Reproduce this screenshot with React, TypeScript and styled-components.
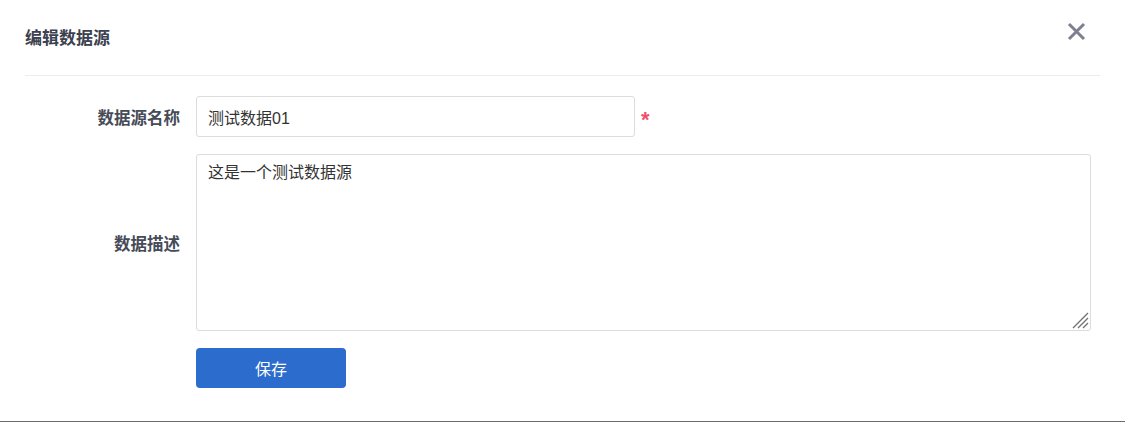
import React from "react";
import styled, { createGlobalStyle } from "styled-components";

const GlobalStyle = createGlobalStyle`
  html, body { margin: 0; padding: 0; background: #fff; }
  body { font-family: "Liberation Sans", "Noto Sans CJK SC", sans-serif; }
  * { box-sizing: border-box; }
`;

const Dialog = styled.div`
  position: relative;
  width: 1125px;
  height: 422px;
  background: #fff;
  border-bottom: 1px solid #6b6b6b;
`;

const Header = styled.div`
  margin: 0 25px;
  height: 76px;
  display: flex;
  align-items: center;
  justify-content: space-between;
  border-bottom: 1px solid #ececec;
`;

const Title = styled.h2`
  margin: 0;
  font-size: 17px;
  font-weight: 700;
  color: #3c4150;
  padding-bottom: 2px;
`;

const CloseButton = styled.button`
  position: absolute;
  top: 21px;
  right: 38px;
  width: 21px;
  height: 21px;
  padding: 0;
  border: 0;
  background: transparent;
  cursor: pointer;
  display: flex;
  align-items: center;
  justify-content: center;
`;

const Form = styled.div`
  display: grid;
  grid-template-columns: 180px 1fr;
  column-gap: 16px;
  row-gap: 17px;
  padding: 20px 34px 0 0;
  align-items: center;
`;

const Label = styled.label`
  text-align: right;
  font-size: 16.5px;
  font-weight: 700;
  color: #464b57;
`;

const FieldRow = styled.div`
  display: flex;
  align-items: center;
  gap: 6px;
`;

const TextInput = styled.input`
  width: 439px;
  height: 41px;
  border: 1px solid #dcdcdc;
  border-radius: 3px;
  padding: 0 11px;
  font-family: "Liberation Sans", "Noto Sans CJK SC", sans-serif;
  font-size: 16px;
  color: #333;
  outline: none;
`;

const Required = styled.span`
  color: #f0506e;
  font-size: 22px;
  font-weight: 700;
  line-height: 1;
  padding-top: 7px;
`;

const AreaWrap = styled.div`
  position: relative;
`;

const TextArea = styled.textarea`
  width: 100%;
  height: 177px;
  display: block;
  border: 1px solid #dcdcdc;
  border-radius: 3px;
  padding: 7px 11px;
  font-family: "Liberation Sans", "Noto Sans CJK SC", sans-serif;
  font-size: 16px;
  line-height: 22px;
  color: #333;
  outline: none;
  resize: none;
`;

const Grip = styled.svg`
  position: absolute;
  right: 2px;
  bottom: 2px;
  pointer-events: none;
`;

const Spacer = styled.div``;

const SaveButton = styled.button`
  width: 150px;
  height: 40px;
  border: 0;
  border-radius: 4px;
  background: #2b6ccd;
  color: #fff;
  font-family: "Liberation Sans", "Noto Sans CJK SC", sans-serif;
  font-size: 16px;
  cursor: pointer;
`;

export default function App() {
  return (
    <>
      <GlobalStyle />
      <Dialog>
        <Header>
          <Title>编辑数据源</Title>
        </Header>
        <CloseButton aria-label="关闭">
          <svg width="19" height="19" viewBox="0 0 19 19">
            <path d="M2 2 L17 17 M17 2 L2 17" stroke="#7c8090" strokeWidth="3" strokeLinecap="butt" />
          </svg>
        </CloseButton>
        <Form>
          <Label>数据源名称</Label>
          <FieldRow>
            <TextInput defaultValue="测试数据01" />
            <Required>*</Required>
          </FieldRow>
          <Label>数据描述</Label>
          <AreaWrap>
            <TextArea defaultValue="这是一个测试数据源" />
            <Grip width="17" height="17" viewBox="0 0 17 17">
              <path
                d="M16 1 L1 16 M16 6 L6 16 M16 11 L11 16"
                stroke="#707070"
                strokeWidth="1.3"
                fill="none"
              />
            </Grip>
          </AreaWrap>
          <Spacer />
          <div>
            <SaveButton>保存</SaveButton>
          </div>
        </Form>
      </Dialog>
    </>
  );
}
